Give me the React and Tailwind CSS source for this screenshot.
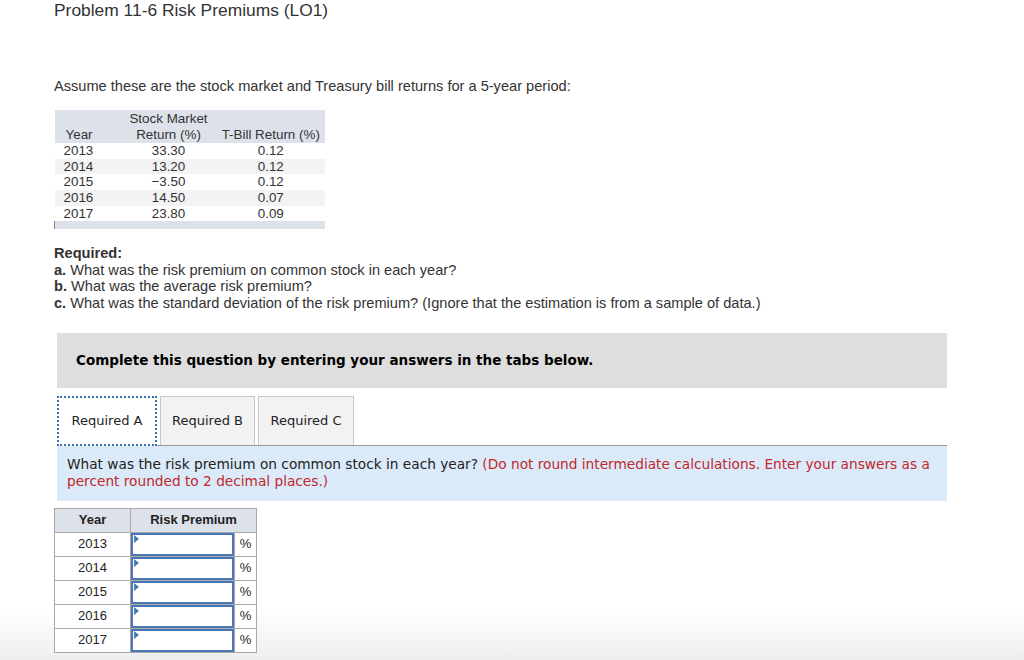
import React from "react";

const stockRows = [
  ["2013", "33.30", "0.12"],
  ["2014", "13.20", "0.12"],
  ["2015", "\u22123.50", "0.12"],
  ["2016", "14.50", "0.07"],
  ["2017", "23.80", "0.09"],
];

const years = ["2013", "2014", "2015", "2016", "2017"];

const sans = "font-['Liberation_Sans',Arial,sans-serif]";
const verdana = "font-['DejaVu_Sans',Verdana,sans-serif]";

const AnswerRow = ({ year }) => (
  <tr>
    <td className="h-6 border border-[#a9a9a9] bg-white text-center text-[13px]">{year}</td>
    <td className="relative h-6 border border-[#a9a9a9] bg-white p-0">
      <div className="h-[23px] w-full border-2 border-[#4a78b5] bg-white" />
      <span className="absolute left-[3px] top-[2px] h-0 w-0 border-y-[4px] border-l-[5px] border-y-transparent border-l-[#4a78b5]" />
    </td>
    <td className="h-6 border border-[#a9a9a9] bg-white text-center text-[13px]">%</td>
  </tr>
);

export default function App() {
  return (
    <div className={`relative h-[660px] w-[1024px] overflow-hidden bg-white text-[#222] ${sans}`}>
      <div className="absolute inset-x-0 bottom-0 h-[50px] bg-gradient-to-b from-white to-[#eeeeee]" />

      <div className="relative">
        <div className="pl-[54px]">
          <h1 className="text-[17.4px] leading-[20px] text-[#333]">Problem 11-6 Risk Premiums (LO1)</h1>

          <p className="mt-[57px] text-[14.6px] leading-[18px] text-[#333]">
            Assume these are the stock market and Treasury bill returns for a 5-year period:
          </p>

          <table className="mt-[15px] w-[271px] border-collapse text-[13.4px] leading-[15.6px] text-[#333]">
            <thead>
              <tr className="bg-[#dde1ea]">
                <th className="w-[66px] pb-[1px] pl-[11px] pt-[16px] text-left align-bottom font-normal">Year</th>
                <th className="w-[96px] pb-[1px] pt-[1px] text-center align-bottom font-normal">
                  Stock Market
                  <br />
                  Return (%)
                </th>
                <th className="pb-[1px] text-center align-bottom font-normal">T-Bill Return (%)</th>
              </tr>
            </thead>
            <tbody>
              {stockRows.map((r, i) => (
                <tr key={r[0]} className={i % 2 === 1 ? "bg-[#f3f3f3]" : "bg-white"}>
                  <td className="pl-[9px] text-left">{r[0]}</td>
                  <td className="text-center">{r[1]}</td>
                  <td className="text-center">{r[2]}</td>
                </tr>
              ))}
              <tr>
                <td colSpan={3} className="h-[8px] border-l border-[#888] bg-[#dde1ea] p-0" />
              </tr>
            </tbody>
          </table>

          <div className="mt-[16px] text-[14.6px] leading-[16.6px] text-[#333]">
            <p className="font-bold">Required:</p>
            <p>
              <b>a.</b> What was the risk premium on common stock in each year?
            </p>
            <p>
              <b>b.</b> What was the average risk premium?
            </p>
            <p>
              <b>c.</b> What was the standard deviation of the risk premium? (Ignore that the estimation is from a sample of data.)
            </p>
          </div>
        </div>

        <div className="ml-[57px] w-[890px]">
          <div className={`mt-[21px] flex h-[55px] items-center bg-[#dedede] pl-[19px] text-[13.5px] font-bold text-black ${verdana}`}>
            Complete this question by entering your answers in the tabs below.
          </div>

          <div className={`mt-[8px] flex items-end border-b border-[#999] text-[13px] text-[#222] ${verdana}`}>
            <div className="-mb-px flex h-[50px] w-[100px] items-center justify-center border-2 border-dotted border-[#3b6fb6] bg-white">
              Required A
            </div>
            <div className="ml-[3px] flex h-[49px] w-[95px] items-center justify-center border border-b-0 border-[#c8c8c8] bg-[#f2f2f2]">
              Required B
            </div>
            <div className="ml-[3px] flex h-[49px] w-[96px] items-center justify-center border border-b-0 border-[#c8c8c8] bg-[#f2f2f2]">
              Required C
            </div>
          </div>

          <div className={`h-[55px] bg-[#dbeaf8] px-[10px] pt-[10px] text-[13.7px] leading-[17px] text-[#222] ${verdana}`}>
            What was the risk premium on common stock in each year?{" "}
            <span className="text-[#c1272d]">
              (Do not round intermediate calculations. Enter your answers as a percent rounded to 2 decimal places.)
            </span>
          </div>
        </div>

        <table className="ml-[54px] mt-[7px] w-[202px] table-fixed border-collapse text-[#222]">
          <colgroup>
            <col className="w-[76px]" />
            <col className="w-[104px]" />
            <col className="w-[22px]" />
          </colgroup>
          <thead>
            <tr className="bg-[#dde1ea]">
              <th className="h-6 border border-[#a9a9a9] text-center text-[13px] font-bold">Year</th>
              <th colSpan={2} className="h-6 border border-[#a9a9a9] text-center text-[13px] font-bold">
                Risk Premium
              </th>
            </tr>
          </thead>
          <tbody>
            {years.map((y) => (
              <AnswerRow key={y} year={y} />
            ))}
          </tbody>
        </table>
      </div>
    </div>
  );
}
